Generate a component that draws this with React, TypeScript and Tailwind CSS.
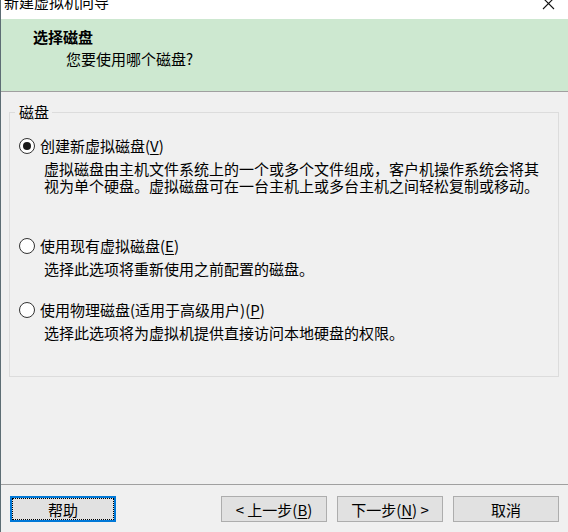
import React from "react";

function Radio({ checked }: { checked?: boolean }) {
  return (
    <div className="w-[16px] h-[16px] shrink-0 rounded-full border border-[#333333] bg-white flex items-center justify-center">
      {checked && <div className="w-[8px] h-[8px] rounded-full bg-[#1a1a1a]" />}
    </div>
  );
}

function Option({
  checked,
  label,
  mnemonic,
  after,
  desc,
  className,
}: {
  checked?: boolean;
  label: string;
  mnemonic: string;
  after?: string;
  desc: string[];
  className?: string;
}) {
  return (
    <div className={className}>
      <div className="flex items-center h-[16px]">
        <Radio checked={checked} />
        <span className="ml-[5px] leading-[16px] whitespace-nowrap">
          {label}(<span className="underline underline-offset-2">{mnemonic}</span>){after}
        </span>
      </div>
      <div className="mt-[6px] ml-[25px] leading-[17px]">
        {desc.map((d, i) => (
          <div key={i} className="whitespace-nowrap">
            {d}
          </div>
        ))}
      </div>
    </div>
  );
}

function Btn({ children, focused }: { children: React.ReactNode; focused?: boolean }) {
  if (focused) {
    return (
      <div className="relative w-[106px] h-[26px] border-2 border-[#0078d7] bg-[#e1e1e1] flex items-center justify-center leading-[15px]">
        <div className="absolute inset-0 border border-dotted border-black" />
        {children}
      </div>
    );
  }
  return (
    <div className="w-[106px] h-[26px] border border-[#adadad] bg-[#e1e1e1] flex items-center justify-center leading-[15px]">
      {children}
    </div>
  );
}

export default function App() {
  return (
    <div className="w-[568px] h-[532px] overflow-hidden bg-[#f0f0f0] border-l border-[#5d6d74] flex flex-col text-[15px] text-black font-['Noto_Sans_CJK_SC',sans-serif]">
      {/* title bar */}
      <div className="h-[19px] shrink-0 bg-white overflow-hidden flex justify-between">
        <span className="pl-[3px] mt-[-6px] leading-[15px] h-[15px] whitespace-nowrap">新建虚拟机向导</span>
        <svg width="13" height="13" viewBox="0 0 13 13" className="mt-[-3px] mr-[13px]">
          <path d="M1 1 L12 12 M12 1 L1 12" stroke="#111" strokeWidth="1.1" fill="none" />
        </svg>
      </div>
      {/* header */}
      <div className="h-[73px] shrink-0 bg-[#cde8d0] border-b border-[#a0a0a0] pt-[10px]">
        <div className="pl-[32px] font-bold leading-[15px]">选择磁盘</div>
        <div className="pl-[65px] mt-[7px] leading-[15px]">您要使用哪个磁盘?</div>
      </div>
      {/* content */}
      <div className="flex-1 pt-[12px]">
        <div className="relative ml-[8px] w-[550px] h-[273px] pt-[8px]">
          <div className="h-[265px] border border-[#dcdcdc] pl-[9px] pt-[25px]">
            <Option
              checked
              label="创建新虚拟磁盘"
              mnemonic="V"
              desc={[
                "虚拟磁盘由主机文件系统上的一个或多个文件组成，客户机操作系统会将其",
                "视为单个硬盘。虚拟磁盘可在一台主机上或多台主机之间轻松复制或移动。",
              ]}
            />
            <Option
              className="mt-[44px]"
              label="使用现有虚拟磁盘"
              mnemonic="E"
              desc={["选择此选项将重新使用之前配置的磁盘。"]}
            />
            <Option
              className="mt-[25px]"
              label="使用物理磁盘(适用于高级用户)"
              mnemonic="P"
              desc={["选择此选项将为虚拟机提供直接访问本地硬盘的权限。"]}
            />
          </div>
          <div className="absolute left-[6px] top-0 pl-[4px] pr-[3px] bg-[#f0f0f0] leading-[15px]">磁盘</div>
        </div>
      </div>
      {/* footer */}
      <div className="h-[48px] shrink-0 border-t border-[#a0a0a0] pt-[11px] pl-[9px] pr-[9px] flex items-start">
        <Btn focused>帮助</Btn>
        <div className="flex-1" />
        <div className="flex gap-[10px]">
          <Btn>
            &lt; 上一步(<span className="underline underline-offset-2">B</span>)
          </Btn>
          <Btn>
            下一步(<span className="underline underline-offset-2">N</span>) &gt;
          </Btn>
          <Btn>取消</Btn>
        </div>
      </div>
    </div>
  );
}
